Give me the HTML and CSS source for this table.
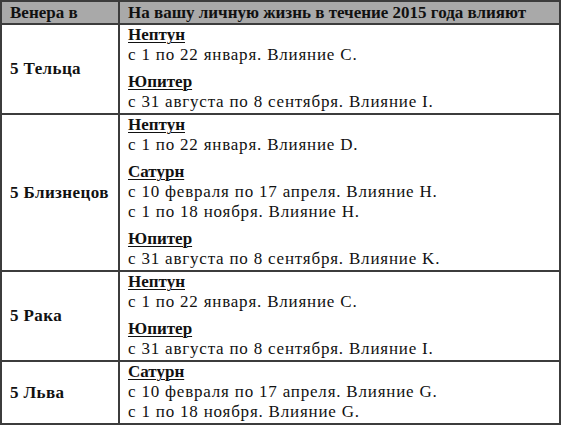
FILE: index.html
```html
<!DOCTYPE html>
<html lang="ru">
<head>
<meta charset="utf-8">
<link rel="stylesheet" href="styles.css">
</head>
<body>
<table class="astro">
  <thead>
    <tr>
      <th class="sign">Венера в</th>
      <th class="effects">На вашу личную жизнь в течение 2015 года влияют</th>
    </tr>
  </thead>
  <tbody>
    <tr>
      <td class="sign">5 Тельца</td>
      <td class="effects">
        <div class="planet"><div class="name">Нептун</div><div>с 1 по 22 января. Влияние C.</div></div>
        <div class="planet"><div class="name">Юпитер</div><div>с 31 августа по 8 сентября. Влияние I.</div></div>
      </td>
    </tr>
    <tr>
      <td class="sign">5 Близнецов</td>
      <td class="effects">
        <div class="planet"><div class="name">Нептун</div><div>с 1 по 22 января. Влияние D.</div></div>
        <div class="planet"><div class="name">Сатурн</div><div>с 10 февраля по 17 апреля. Влияние H.</div><div>с 1 по 18 ноября. Влияние H.</div></div>
        <div class="planet"><div class="name">Юпитер</div><div>с 31 августа по 8 сентября. Влияние K.</div></div>
      </td>
    </tr>
    <tr>
      <td class="sign">5 Рака</td>
      <td class="effects">
        <div class="planet"><div class="name">Нептун</div><div>с 1 по 22 января. Влияние C.</div></div>
        <div class="planet"><div class="name">Юпитер</div><div>с 31 августа по 8 сентября. Влияние I.</div></div>
      </td>
    </tr>
    <tr>
      <td class="sign">5 Льва</td>
      <td class="effects">
        <div class="planet"><div class="name">Сатурн</div><div>с 10 февраля по 17 апреля. Влияние G.</div><div>с 1 по 18 ноября. Влияние G.</div></div>
      </td>
    </tr>
  </tbody>
</table>
</body>
</html>
```
FILE: styles.css
```css
html, body {
  margin: 0;
  padding: 0;
  background: #ffffff;
}
body {
  font-family: "Liberation Serif", "DejaVu Serif", serif;
  font-size: 17px;
  line-height: 20px;
  color: #111111;
}
.astro {
  width: 561px;
  border-collapse: collapse;
  table-layout: fixed;
}
.astro th, .astro td {
  border: 2px solid #3c3c3c;
  padding: 0 8px;
  text-align: left;
}
.astro th {
  background: #a9a9a9;
  font-weight: bold;
  height: 21px;
  padding-top: 0;
  padding-bottom: 0;
  vertical-align: middle;
  white-space: nowrap;
}
.astro th.sign, .astro td.sign {
  width: 104px;
  padding-right: 4px;
}
.astro td.sign {
  font-weight: bold;
  vertical-align: middle;
  white-space: nowrap;
  letter-spacing: 0.4px;
}
.astro td.effects {
  vertical-align: top;
  padding-bottom: 1px;
  letter-spacing: 0.8px;
  white-space: nowrap;
}
.planet + .planet {
  margin-top: 7px;
}
.name {
  font-weight: bold;
  letter-spacing: 0;
  text-decoration: underline;
  text-decoration-thickness: 1px;
  text-underline-offset: 2px;
}
```
